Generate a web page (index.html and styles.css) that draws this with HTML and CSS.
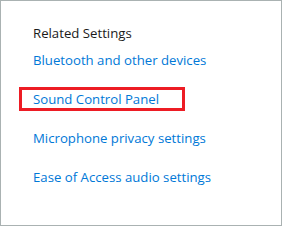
FILE: index.html
```html
<!DOCTYPE html>
<html lang="en">
<head>
    <meta charset="UTF-8">
    <title>Related Settings</title>
    <link rel="stylesheet" href="styles.css">
</head>
<body>

<div class="panel">
    <h3 class="title">Related Settings</h3>
    <ul class="links">
        <li><a href="#">Bluetooth and other devices</a></li>
        <li class="marked"><a href="#">Sound Control Panel</a><span class="mark"></span></li>
        <li><a href="#">Microphone privacy settings</a></li>
        <li><a href="#">Ease of Access audio settings</a></li>
    </ul>
</div>

</body>
</html>
```

FILE: styles.css
```css
body {
    margin: 0;
    padding: 0;
    background-color: #fff;
    font-family: "Open Sans", "Noto Sans", sans-serif;
}
.panel {
    box-sizing: border-box;
    width: 282px;
    height: 226px;
    border: 1px solid #aab2b2;
    padding: 22px 0 0 32px;
}
.title {
    margin: 0;
    font-size: 13.2px;
    font-weight: normal;
    line-height: 20px;
    color: #1a1a1a;
}
.links {
    list-style: none;
    margin: 7px 0 0;
    padding: 0;
    display: flex;
    flex-direction: column;
    gap: 19px;
}
.links li {
    position: relative;
    line-height: 20px;
    font-size: 13.2px;
}
.links a {
    color: #0078d7;
    text-decoration: none;
}
.mark {
    position: absolute;
    left: -14px;
    top: -2px;
    width: 160px;
    height: 18px;
    border: 3px solid #ed1c24;
}
```
